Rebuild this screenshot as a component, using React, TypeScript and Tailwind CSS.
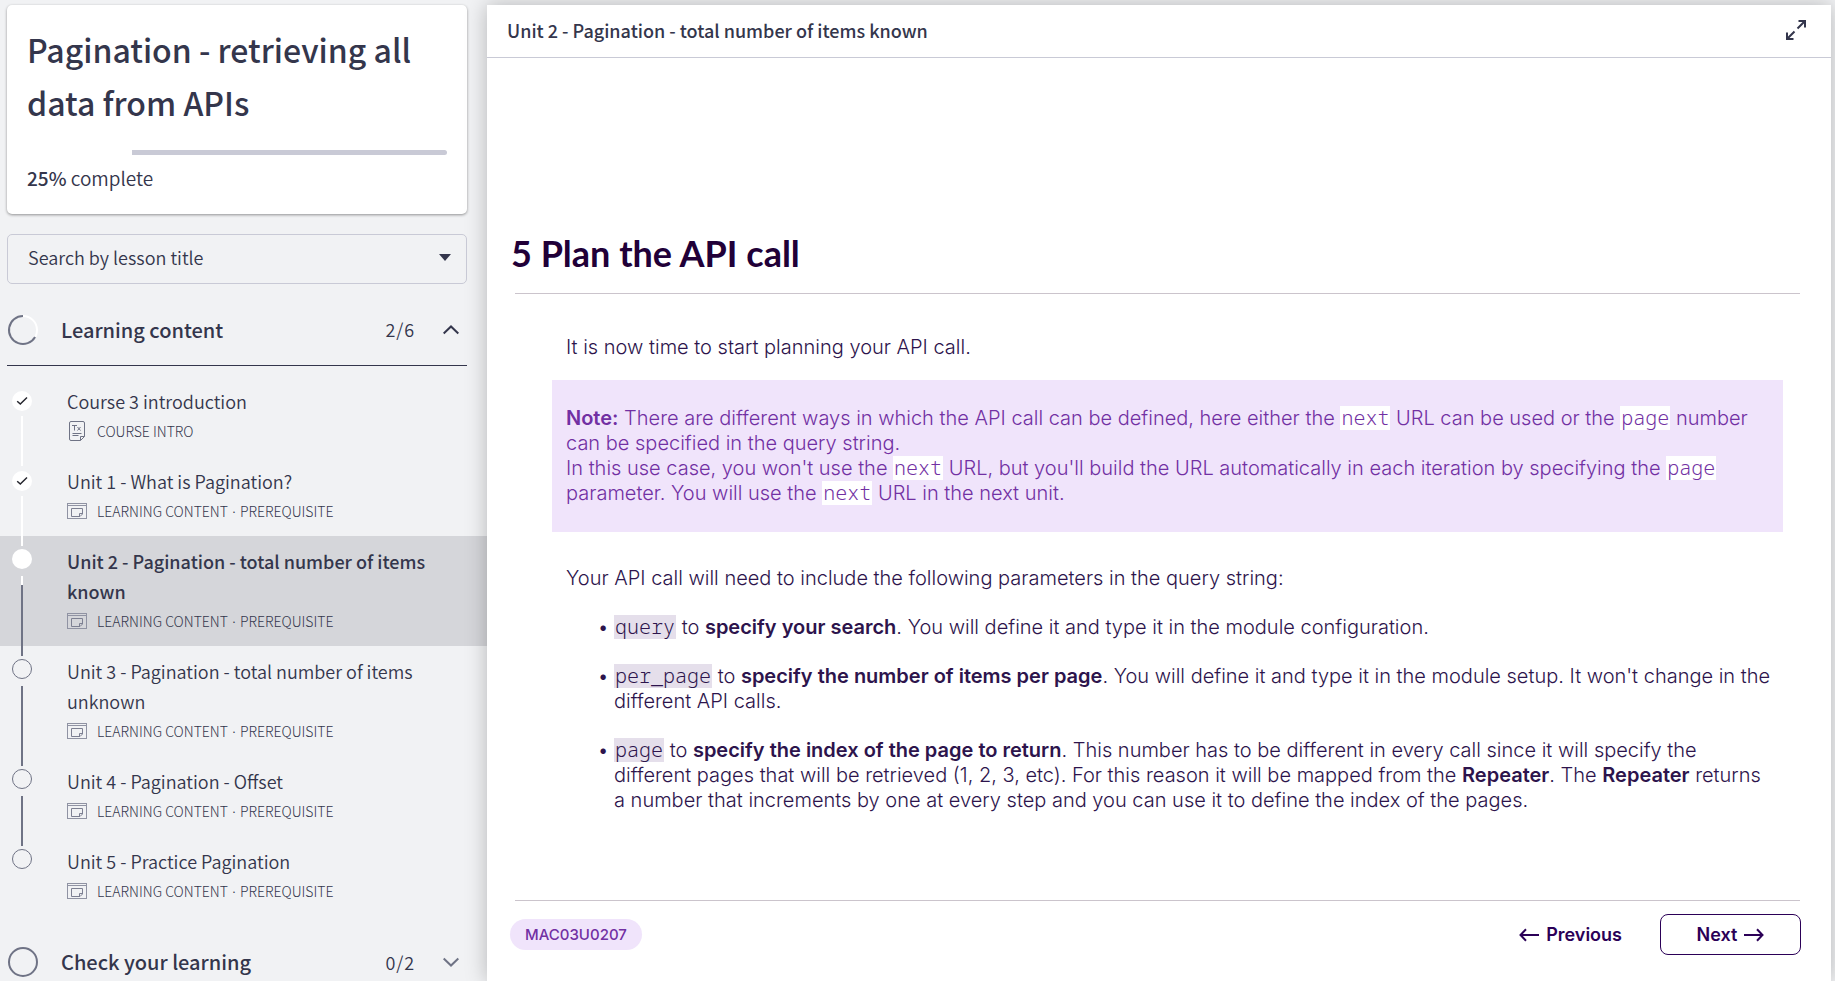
import React from "react";

type Status = "done" | "current" | "todo";

interface Lesson {
  title: string;
  kind: "text" | "slides";
  meta: string[];
  status: Status;
}

const unitMeta = ["LEARNING CONTENT", "PREREQUISITE"];

const lessons: Lesson[] = [
  { title: "Course 3 introduction", kind: "text", meta: ["COURSE INTRO"], status: "done" },
  { title: "Unit 1 - What is Pagination?", kind: "slides", meta: unitMeta, status: "done" },
  { title: "Unit 2 - Pagination - total number of items known", kind: "slides", meta: unitMeta, status: "current" },
  { title: "Unit 3 - Pagination - total number of items unknown", kind: "slides", meta: unitMeta, status: "todo" },
  { title: "Unit 4 - Pagination - Offset", kind: "slides", meta: unitMeta, status: "todo" },
  { title: "Unit 5 - Practice Pagination", kind: "slides", meta: unitMeta, status: "todo" },
];

function TextIcon() {
  return (
    <svg className="h-5 w-5" viewBox="0 0 20 20" fill="none" stroke="#6f7385" strokeWidth="1" aria-hidden="true">
      <path d="M4 .5h12a1.500 1.500 0 0 1 1.500 1.500v13.500L13.500 19.500H4A1.500 1.500 0 0 1 2.500 18V2A1.500 1.500 0 0 1 4 .5Z" />
      <path d="M13.500 19.500v-4h4M5 4.500h5M7.500 4.500V9.500M10.500 6l3 3.500M13.500 6l-3 3.500M5.500 12.500h9M5.500 14.500h6" />
    </svg>
  );
}

function SlidesIcon() {
  return (
    <svg className="h-5 w-5" viewBox="0 0 20 20" fill="none" stroke="#9093a3" strokeWidth="1" aria-hidden="true">
      <rect x=".5" y="2.500" width="19" height="15" />
      <path d="M.5 4.500h19" />
      <path d="M4.500 7.500h11v5.500l-2.500 2.500H4.500zM12.500 15.500v-3h3" stroke="#7d8092" />
    </svg>
  );
}

function Marker({ status }: { status: Status }) {
  if (status === "done") {
    return (
      <span className="mt-[15px] flex size-5 shrink-0 items-center justify-center rounded-full bg-white">
        <svg className="size-3" viewBox="0 0 12 12" fill="none" stroke="#25262e" strokeWidth="1.500" aria-hidden="true">
          <path d="M1.200 6.300 4.300 9 11 2.500" />
        </svg>
      </span>
    );
  }
  if (status === "current") return <span className="mt-[13px] size-5 shrink-0 rounded-full bg-white" />;
  return <span className="mt-[13px] size-5 shrink-0 rounded-full border border-[#6f7385]" />;
}

function LessonItem({ lesson, last }: { lesson: Lesson; last: boolean }) {
  const current = lesson.status === "current";
  return (
    <li className={current ? "flex bg-[#d5d6da]" : "flex"}>
      <div className="relative z-10 -mb-[10px] ml-3 flex w-5 shrink-0 flex-col items-center">
        <Marker status={lesson.status} />
        {!last && lesson.status === "done" && <span className="mt-[5px] w-[2px] flex-1 bg-white" />}
        {!last && current && (
          <>
            <span className="mt-[7px] h-[9px] w-[2px] bg-white" />
            <span className="w-[2px] flex-1 bg-[#6f7385]" />
          </>
        )}
        {!last && lesson.status === "todo" && <span className="mt-[7px] w-[2px] flex-1 bg-[#6f7385]" />}
      </div>
      <a href="#lesson" className="ml-[35px] block flex-1 py-[10px] pr-12">
        <span className={current ? "block text-[18px] leading-[30px] font-medium" : "block text-[18px] leading-[30px] font-[350]"}>
          {lesson.title}
        </span>
        <span className="flex h-[30px] items-center text-[14px] font-light">
          <span className="mr-[10px]">{lesson.kind === "text" ? <TextIcon /> : <SlidesIcon />}</span>
          {lesson.meta.map((part, i) => (
            <React.Fragment key={part}>
              {i > 0 && <span className="mx-1 font-[Inter,sans-serif]">·</span>}
              <span>{part}</span>
            </React.Fragment>
          ))}
        </span>
      </a>
    </li>
  );
}

function Code({ children }: { children: React.ReactNode }) {
  return <code className="inline-block bg-[#e5dfeb] px-px font-['Noto_Sans_Mono','DejaVu_Sans_Mono',monospace] text-[20px] leading-[24px]">{children}</code>;
}

function NoteCode({ children }: { children: React.ReactNode }) {
  return <code className="inline-block bg-white px-px font-['Noto_Sans_Mono','DejaVu_Sans_Mono',monospace] text-[20px] leading-[24px]">{children}</code>;
}

function ArrowIcon({ back }: { back?: boolean }) {
  return (
    <svg className="h-4 w-5" viewBox="0 0 20 16" fill="none" stroke="#2b0057" strokeWidth="2" aria-hidden="true">
      <path d={back ? "M20 8H1.500M7 2.300 1.500 8 7 13.700" : "M0 8h18.500M13 2.300 18.500 8 13 13.700"} />
    </svg>
  );
}

function Sidebar() {
  return (
    <aside className="w-[487px] shrink-0 pt-[5px]">
      <div className="ml-[7px] mr-5">
        <section className="rounded-[5px] bg-white px-5 pt-[18px] pb-[18px] shadow-[0_1px_3px_rgba(0,0,0,0.4)]">
          <h1 className="text-[32px] leading-[53px] font-medium">Pagination - retrieving all data from APIs</h1>
          <div className="mt-[21px] flex h-[5px]" role="progressbar" aria-label="Course progress" aria-valuenow={25} aria-valuemin={0} aria-valuemax={100}>
            <span className="w-1/4" />
            <span className="flex-1 rounded-r-full bg-[#c9cad6]" />
          </div>
          <p className="mt-[7px] h-[34px] text-[19px] leading-[32px] font-[350]">
            <b className="font-medium">25%</b> complete
          </p>
        </section>
        <button type="button" className="mt-5 flex h-[50px] w-full items-center justify-between rounded-[5px] border border-[#c9cad6] pr-[15px] pb-[3px] pl-5 text-[18px] font-[350]">
          Search by lesson title
          <svg className="h-[7px] w-3" viewBox="0 0 12 7" fill="#34364c" aria-hidden="true">
            <path d="M0 0h12L6 7z" />
          </svg>
        </button>
        <button type="button" className="flex h-[82px] w-full items-center border-b border-[#34364c] pt-[10px] pr-2 text-left" aria-expanded="true">
          <svg className="size-[32px]" viewBox="0 0 32 32" fill="none" strokeWidth="2" aria-hidden="true">
            <circle cx="16" cy="16" r="14" stroke="#ffffff" />
            <path d="M16 2A14 14 0 1 0 28.100 23" stroke="#6f7385" />
          </svg>
          <span className="ml-[22px] flex-1 text-[20px] font-medium">Learning content</span>
          <span className="text-[18px] tracking-wider font-[350]">2/6</span>
          <svg className="ml-7 h-[10px] w-4" viewBox="0 0 16 10" fill="none" stroke="#34364c" strokeWidth="2" aria-hidden="true">
            <path d="M.7 8.500 8 1.500l7.300 7" />
          </svg>
        </button>
      </div>
      <ul className="pt-[10px]">
        {lessons.map((lesson, i) => (
          <LessonItem key={lesson.title} lesson={lesson} last={i === lessons.length - 1} />
        ))}
      </ul>
      <div className="ml-[7px] mr-5 pt-[10px]">
        <button type="button" className="flex h-[72px] w-full items-center pr-2 text-left" aria-expanded="false">
          <svg className="size-[32px]" viewBox="0 0 32 32" fill="none" strokeWidth="2" aria-hidden="true">
            <circle cx="16" cy="16" r="14" stroke="#6f7385" />
          </svg>
          <span className="ml-[22px] flex-1 text-[20px] font-medium">Check your learning</span>
          <span className="text-[18px] tracking-wider font-[350]">0/2</span>
          <svg className="ml-7 h-[10px] w-4" viewBox="0 0 16 10" fill="none" stroke="#6f7385" strokeWidth="2" aria-hidden="true">
            <path d="M.7 1.500 8 8.500l7.300-7" />
          </svg>
        </button>
      </div>
    </aside>
  );
}

export default function App() {
  return (
    <div className="flex h-screen overflow-hidden bg-[#f1f2f4] font-['Noto_Sans_CJK_SC',sans-serif] text-[#34364c]">
      <Sidebar />
      <main className="relative z-20 mt-[5px] mr-1 flex flex-1 flex-col bg-white shadow-[0_0_20px_rgba(0,0,0,0.25)]">
        <header className="flex h-[53px] shrink-0 items-center justify-between border-b border-[#c9cad6] pr-6 pb-[2px] pl-5">
          <h2 className="text-[18px] font-medium">Unit 2 - Pagination - total number of items known</h2>
          <button type="button" aria-label="Full screen">
            <svg className="size-[22px]" viewBox="0 0 22 22" fill="none" stroke="#34364c" strokeWidth="2" aria-hidden="true">
              <path d="M12.500 9.500 20 2M13.500 2H20v6.500M9.500 12.500 2 20M2 13.500V20h6.500" />
            </svg>
          </button>
        </header>
        <article className="flex flex-1 flex-col pr-[31px] pl-7 font-[Inter,sans-serif] text-[20px] leading-[25px] font-light text-[#2d144c]">
          <h3 className="mt-[170px] -ml-1 font-[Lato,sans-serif] text-[36px] leading-[50px] font-bold text-[#210038]">5 Plan the API call</h3>
          <hr className="mt-[15px] border-[#cbc4cc]" />
          <p className="mt-[41px] ml-[51px]">It is now time to start planning your API call.</p>
          <p className="mt-[20px] mr-[17px] ml-[37px] bg-[#f0e4fb] px-[14px] pt-[26px] pb-[26px] text-[#7230a3]">
            <strong className="font-semibold">Note:</strong> There are different ways in which the API call can be defined, here either the <NoteCode>next</NoteCode> URL can be used or the <NoteCode>page</NoteCode> number can be specified in the query string.
            <br />
            In this use case, you won't use the <NoteCode>next</NoteCode> URL, but you'll build the URL automatically in each iteration by specifying the <NoteCode>page</NoteCode> parameter. You will use the <NoteCode>next</NoteCode> URL in the next unit.
          </p>
          <p className="mt-[34px] ml-[51px]">Your API call will need to include the following parameters in the query string:</p>
          <ul className="mt-6 mr-[26px] ml-[99px] flex list-['•_'] flex-col gap-6">
            <li>
              <Code>query</Code> to <strong className="font-semibold">specify your search</strong>. You will define it and type it in the module configuration.
            </li>
            <li>
              <Code>per_page</Code> to <strong className="font-semibold">specify the number of items per page</strong>. You will define it and type it in the module setup. It won't change in the different API calls.
            </li>
            <li>
              <Code>page</Code> to <strong className="font-semibold">specify the index of the page to return</strong>. This number has to be different in every call since it will specify the different pages that will be retrieved (1, 2, 3, etc). For this reason it will be mapped from the <strong className="font-semibold">Repeater</strong>. The <strong className="font-semibold">Repeater</strong> returns a number that increments by one at every step and you can use it to define the index of the pages.
            </li>
          </ul>
          <hr className="mt-auto border-[#cbc4cc]" />
          <footer className="mt-[13px] mb-[26px] -ml-[5px] flex h-[41px] items-center">
            <span className="flex h-[31px] items-center rounded-full bg-[#f0e4fb] px-[15px] text-[15px] font-medium text-[#7230a3]">MAC03U0207</span>
            <button type="button" className="ml-auto flex items-center gap-[7px] text-[18px] font-semibold text-[#2b0057]">
              <ArrowIcon back />
              Previous
            </button>
            <button type="button" className="-mr-px ml-[38px] flex h-[41px] w-[141px] items-center justify-center gap-[7px] rounded-lg border border-[#2b0057] text-[18px] font-semibold text-[#2b0057]">
              Next
              <ArrowIcon />
            </button>
          </footer>
        </article>
      </main>
    </div>
  );
}
